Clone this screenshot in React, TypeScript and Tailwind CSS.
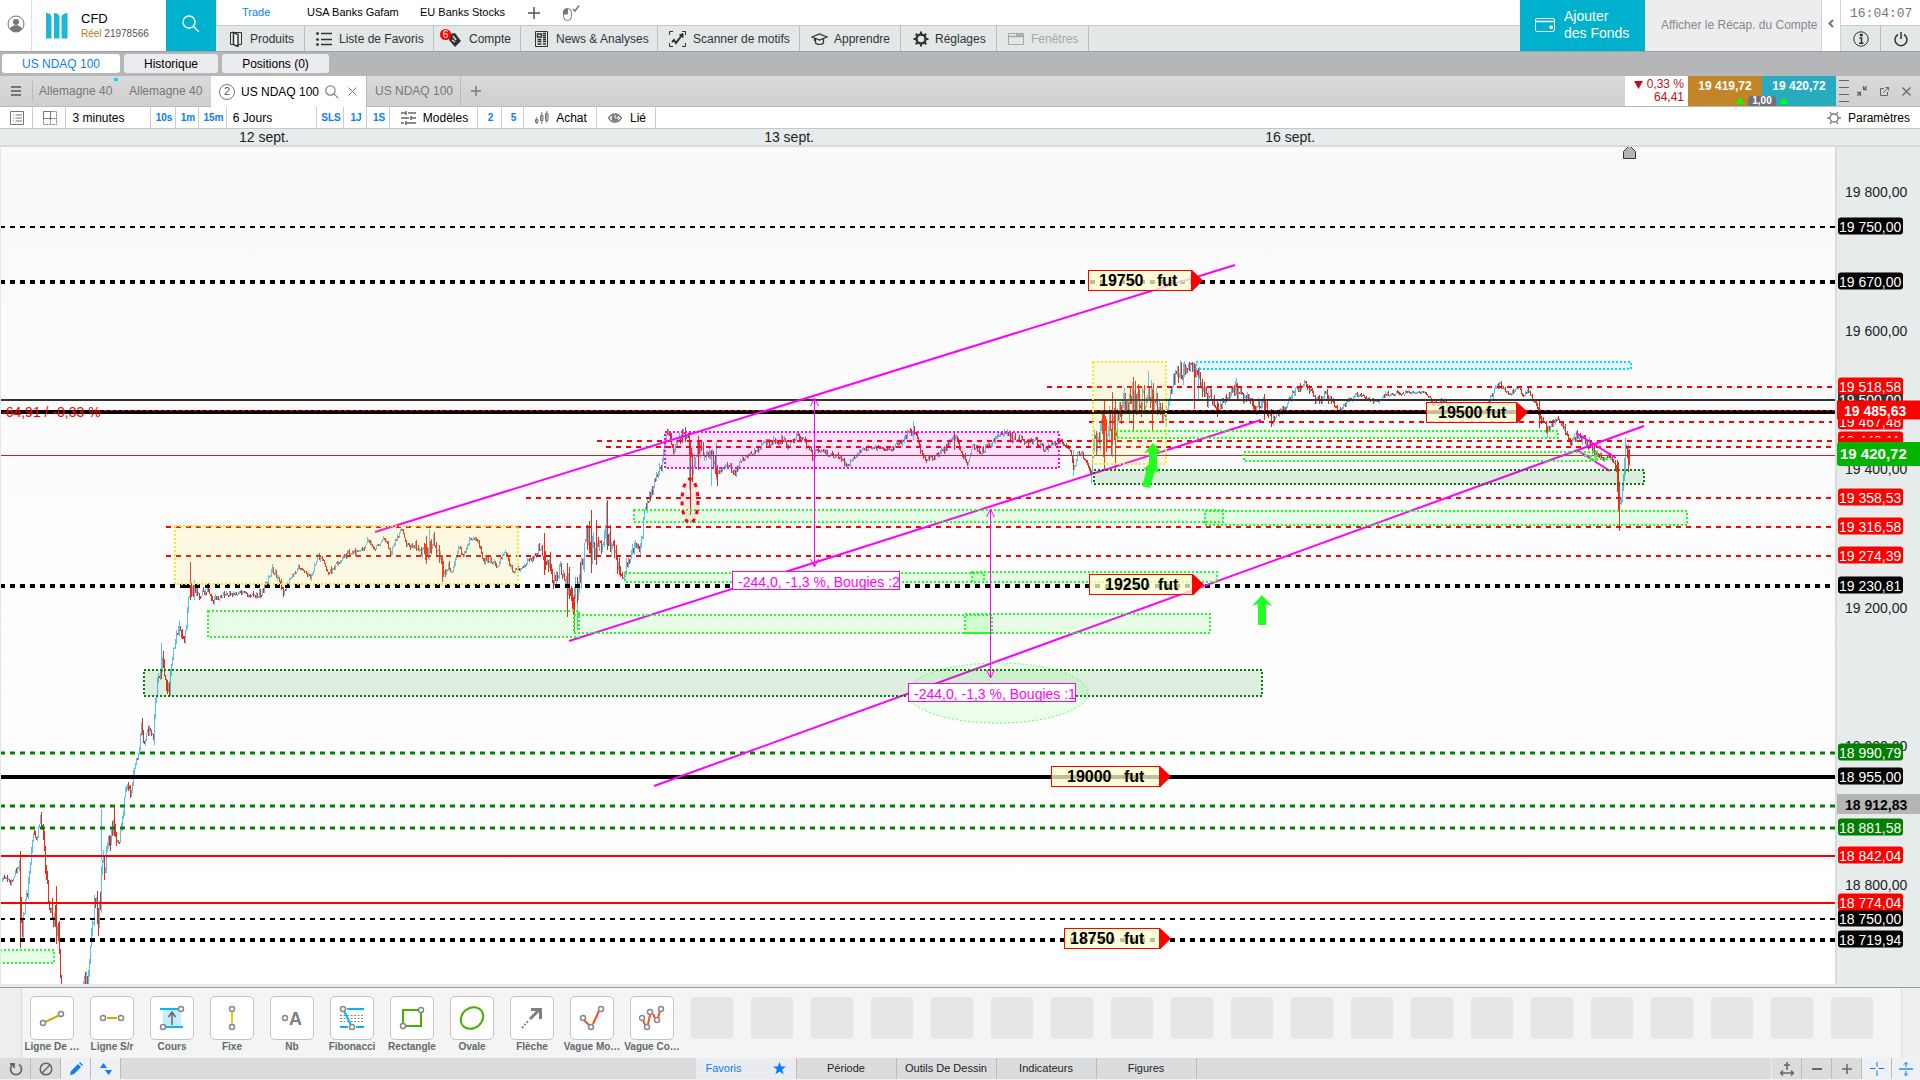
import React from "react";

/* ---------- price chart data ---------- */

type Pt = [number, number, number?];

const PRICE_PATH: Pt[] = [
  [2, 881, 2], [5, 876], [10, 883], [15, 872], [19, 865, 4], [20, 920, 26], [22, 920, 14], [25, 908, 10], [28, 880, 8], [31, 850, 6], [33, 832, 3],
  [36, 840, 3], [40, 817, 3], [43, 835, 8], [45, 870, 16], [48, 890, 16], [50, 905, 14], [52, 915, 14], [55, 915, 16], [57, 930, 14], [59, 950, 14],
  [60, 975, 6], [62, 990, 4], [64, 1010], [80, 1005], [83, 980, 6], [85, 985, 8], [88, 975, 10], [91, 940, 8], [94, 905, 8], [96, 905, 10], [98, 930, 14], [100, 895, 14],
  [102, 860, 12], [104, 870, 9], [107, 840, 10], [110, 840, 12], [113, 820, 12], [116, 838, 6], [119, 845, 5], [122, 815, 8], [126, 785, 6],
  [130, 795, 6], [134, 770, 5], [138, 755, 4], [141, 725, 6], [144, 745, 6], [149, 725, 6], [153, 735, 6], [156, 690, 10], [158, 682, 8],
  [162, 665, 10], [165, 678, 8], [169, 690, 8], [172, 660, 8], [176, 640, 8], [180, 628, 7], [184, 640, 7], [187, 610, 6], [190, 590, 8],
  [191, 590, 10], [195, 592, 6], [200, 595, 4], [207, 588, 4], [213, 600, 4], [218, 598, 3], [225, 595, 3], [240, 592, 2], [250, 596, 3], [260, 595, 4],
  [268, 580, 4], [272, 569, 4], [278, 578, 4], [283, 595, 4], [290, 580, 4], [298, 566, 3], [303, 570, 2], [310, 578, 3], [317, 556, 3],
  [323, 560, 3], [328, 573, 3], [334, 568, 4], [340, 560, 3], [347, 553, 3], [355, 552, 3], [362, 550, 2], [368, 540, 4], [375, 548, 2],
  [384, 538, 3], [390, 552, 4], [398, 535, 3], [402, 530, 3], [406, 545, 3], [415, 545, 4], [420, 552, 5], [427, 550, 8], [432, 540, 9],
  [438, 552, 6], [444, 573, 5], [448, 565, 5], [452, 572, 4], [458, 548, 3], [463, 555, 3], [470, 537, 3], [478, 540, 3], [483, 560, 3],
  [490, 560, 3], [497, 565, 3], [504, 550, 3], [512, 570, 3], [520, 570, 2], [527, 562, 3], [535, 555, 3], [541, 545, 5], [545, 565, 12],
  [549, 570, 12], [555, 580, 6], [560, 568, 5], [565, 578, 6], [568, 590, 18], [572, 600, 20], [576, 590, 18], [580, 580, 18], [583, 550, 14],
  [586, 530, 10], [590, 545, 16], [594, 555, 14], [600, 545, 8], [606, 530, 12], [612, 550, 8], [616, 560, 8], [619, 575, 8], [622, 580, 6],
  [626, 565, 5], [632, 552, 5], [636, 545, 5], [640, 550, 6], [644, 512, 5], [650, 495, 5], [655, 480, 5], [661, 465, 5], [665, 440, 8],
  [669, 435, 6], [673, 450, 5], [678, 440, 5], [683, 435, 6], [688, 440, 7], [690, 465, 14], [692, 465, 12], [697, 445, 8], [705, 455, 7],
  [711, 455, 8], [717, 475, 6], [722, 470, 3], [728, 465, 4], [735, 475, 4], [740, 460, 3], [748, 455, 2], [757, 450, 3], [765, 442, 4],
  [775, 445, 5], [780, 440, 5], [788, 445, 4], [797, 436, 3], [803, 440, 3], [812, 455, 4], [820, 450, 3], [830, 455, 3], [838, 455, 3],
  [846, 466, 3], [855, 455, 3], [865, 448, 2], [880, 448, 2], [890, 450, 2], [900, 442, 3], [908, 435, 4], [914, 430, 4], [920, 450, 3],
  [926, 460, 3], [935, 455, 3], [945, 450, 4], [950, 440, 4], [955, 435, 4], [960, 450, 4], [967, 463, 3], [972, 445, 3], [980, 453, 3],
  [990, 443, 4], [1000, 435, 3], [1006, 433, 4], [1015, 440, 4], [1025, 442, 4], [1035, 440, 4], [1045, 450, 3], [1052, 445, 4], [1060, 440, 3],
  [1065, 445, 3], [1070, 450, 3], [1073, 470, 4], [1078, 450, 3], [1082, 455, 3], [1087, 465, 3], [1091, 474, 4], [1094, 440, 14], [1098, 430, 16],
  [1104, 435, 20], [1110, 425, 22], [1115, 440, 20], [1118, 410, 12], [1125, 402, 12], [1133, 398, 14], [1140, 405, 12], [1148, 390, 12],
  [1154, 400, 12], [1160, 412, 7], [1166, 415, 7], [1170, 390, 6], [1173, 378, 5], [1178, 372, 7], [1183, 372, 10], [1190, 365, 4],
  [1196, 368, 8], [1200, 380, 8], [1207, 402, 10], [1213, 400, 8], [1218, 410, 5], [1225, 400, 5], [1232, 390, 8], [1237, 390, 7],
  [1243, 400, 5], [1250, 397, 5], [1256, 408, 6], [1264, 400, 5], [1271, 420, 5], [1278, 413, 3], [1285, 408, 3], [1292, 392, 4], [1300, 387, 4],
  [1305, 383, 3], [1313, 397, 4], [1320, 402, 4], [1325, 395, 5], [1332, 402, 4], [1338, 410, 4], [1345, 403, 3], [1355, 395, 3], [1362, 395, 2],
  [1370, 400, 2], [1378, 402, 2], [1385, 393, 3], [1400, 393, 2], [1425, 392, 1], [1433, 403, 3], [1445, 402, 3], [1455, 415, 3],
  [1470, 418, 2], [1485, 410, 3], [1490, 400, 4], [1495, 385, 3], [1502, 385, 3], [1508, 395, 2], [1518, 388, 3], [1523, 395, 3], [1528, 390, 2],
  [1535, 405, 4], [1540, 415, 6], [1547, 430, 4], [1550, 425, 3], [1557, 418, 3], [1564, 430, 4], [1570, 445, 4], [1577, 436, 5],
  [1583, 440, 5], [1590, 445, 5], [1596, 455, 4], [1602, 458, 3], [1608, 455, 4], [1614, 460, 4], [1617, 475, 8], [1618, 505, 22], [1620, 500, 14],
  [1623, 475, 8], [1625, 450, 12], [1627, 450, 10], [1629, 462, 8],
];

/* isolated long wicks: x, top, bottom, rising */
const WICKS: [number, number, number, boolean][] = [
  [20, 860, 948, false], [56, 886, 940, false], [101, 809, 860, true], [114, 807, 836, false], [161, 643, 672, true], [190, 562, 600, false],
  [194, 580, 600, true], [426, 536, 564, false], [429, 529, 560, true], [442, 555, 582, false], [544, 533, 575, false], [567, 563, 617, false],
  [574, 595, 632, false], [577, 580, 630, true], [591, 510, 573, false], [596, 520, 565, false], [606, 502, 545, true], [607, 500, 550, false],
  [690, 440, 515, false], [689, 440, 490, true], [711, 450, 486, true], [717, 465, 486, false], [698, 438, 470, false], [716, 442, 480, true],
  [913, 421, 440, true], [954, 433, 450, false], [1073, 450, 476, true], [1091, 470, 484, true], [1104, 400, 470, false], [1112, 392, 445, false],
  [1115, 400, 471, false], [1133, 384, 430, false], [1148, 371, 400, true], [1152, 390, 430, false], [1166, 405, 425, true], [1194, 365, 409, false],
  [1198, 370, 400, true], [1217, 400, 417, false], [1236, 378, 395, true], [1264, 395, 420, false], [1271, 415, 427, false],
  [1539, 400, 428, false], [1547, 425, 438, true], [1617, 460, 492, false], [1619, 489, 531, false], [1625, 438, 475, true], [1628, 450, 472, false],
];

function buildCandles() {
  let seed = 7919;
  const rnd = () => {
    seed = (seed * 16807) % 2147483647;
    return seed / 2147483647;
  };
  let up = "";
  let down = "";
  let prev = PRICE_PATH[0][1];
  let i = 0;
  for (let x = 2; x < 1630; x += 1) {
    while (i < PRICE_PATH.length - 2 && PRICE_PATH[i + 1][0] <= x) i++;
    const [x0, y0, v0 = 3] = PRICE_PATH[i];
    const [x1, y1, v1 = 3] = PRICE_PATH[i + 1];
    const t = (x - x0) / (x1 - x0);
    const vol = v0 + (v1 - v0) * t;
    const close = y0 + (y1 - y0) * t + (rnd() - 0.5) * vol * 1.8;
    /* every third column keeps only a short body, so the bars stay distinct */
    const wick = x % 3 === 0 ? 0.1 : 0.8;
    const top = Math.min(prev, close) - rnd() * vol * wick;
    const bottom = Math.max(prev, close) + rnd() * vol * wick;
    const seg = `M${x}.5 ${Math.round(top)}V${Math.round(Math.max(bottom, top + 2))}`;
    if (close < prev) up += seg;
    else down += seg;
    prev = close;
  }
  WICKS.forEach(([x, a, b, rising]) => {
    const seg = `M${x}.5 ${a}V${b}`;
    if (rising) up += seg;
    else down += seg;
  });
  return { up, down };
}

const CANDLES = buildCandles();

/* y, colour, thickness, dash, start x, end x */
const LEVELS: [number, string, number, string, number, number][] = [
  [227, "#000", 2, "5 5", 0, 1835], [282, "#000", 4, "5 5", 0, 1835], [400, "#333", 2, "", 0, 1835], [412, "#000", 4, "", 0, 1835],
  [387, "#f00", 2, "5 5", 1047, 1832], [422, "#f00", 2, "5 5", 1089, 1832], [441, "#f00", 2, "5 5", 597, 1832], [447, "#f00", 2, "5 5", 606, 1832],
  [498, "#f00", 2, "5 5", 526, 1832], [527, "#f00", 2, "5 5", 166, 1832], [556, "#f00", 2, "5 5", 166, 1832], [586, "#000", 4, "5 5", 185, 1835],
  [586, "#000", 4, "5 5", 0, 185],
  [753, "#008000", 3, "5 5", 0, 1835], [777, "#000", 4, "", 0, 1835], [806, "#008000", 3, "5 5", 0, 1835], [828, "#008000", 3, "5 5", 0, 1835],
  [856, "#f00", 2, "", 0, 1835], [903, "#f00", 2, "", 0, 1835], [919, "#000", 2, "5 5", 0, 1835], [940, "#000", 4, "5 5", 0, 1835],
];

/* x1, y1, x2, y2, stroke, fill */
const LIME = "#22ff22";
const LIME_FILL = "rgba(40,255,40,0.1)";
const ZONES: [number, number, number, number, string, string][] = [
  [665, 432, 1059, 468, "#ff00ff", "rgba(255,0,255,0.1)"],
  [175, 526, 518, 584, "#ffe620", "rgba(255,235,60,0.13)"],
  [1093, 362, 1166, 464, "#ffe620", "rgba(255,235,60,0.13)"],
  [1196, 362, 1631, 369, "#00d8ff", "rgba(0,216,255,0.12)"],
  [208, 611, 579, 637, LIME, LIME_FILL], [574, 615, 992, 633, LIME, LIME_FILL], [965, 614, 1210, 633, LIME, LIME_FILL],
  [625, 573, 984, 582, LIME, LIME_FILL], [972, 572, 1217, 582, LIME, LIME_FILL], [634, 510, 1223, 522, LIME, LIME_FILL],
  [1205, 511, 1687, 525, LIME, LIME_FILL], [1116, 431, 1558, 438, LIME, LIME_FILL], [1244, 452, 1597, 461, LIME, LIME_FILL],
  [-4, 950, 54, 963, LIME, LIME_FILL], [144, 670, 1262, 696, "#008000", "rgba(0,128,0,0.12)"], [1094, 470, 1644, 484, "#008000", "rgba(0,128,0,0.12)"],
];

const TRENDS: [number, number, number, number, number][] = [
  [375, 532, 1235, 265, 2], [569, 641, 1261, 420, 2], [654, 786, 1644, 426, 2],
  [1576, 433, 1616, 458, 2], [1577, 450, 1610, 471, 2],
];

/* left, right, top, number x, "fut" x, number */
const TAGS: [number, number, number, number, number, string][] = [
  [1088, 1192, 270, 1099, 1157, "19750"], [1089, 1193, 574, 1105, 1158, "19250"], [1426, 1517, 402, 1438, 1486, "19500"],
  [1051, 1160, 766, 1067, 1124, "19000"], [1064, 1160, 928, 1070, 1124, "18750"],
];

const MEASURES: [number, number, number, string][] = [[732, 571, 168, "-244,0, -1,3 %, Bougies :2"], [908, 683, 168, "-244,0, -1,3 %, Bougies :1"]];

function Chart() {
  return (
    <svg className="absolute inset-0 h-full w-full" viewBox="1 147 1834 837" preserveAspectRatio="none" role="img" aria-label="US NDAQ 100, 3 minutes">
      <path d={CANDLES.up} stroke="#5bc0eb" strokeWidth="1" fill="none" />
      <path d={CANDLES.down} stroke="#ee2c14" strokeWidth="1" fill="none" />
      {LEVELS.map(([y, c, w, d, a, b], i) => (
        <line key={i} x1={a} x2={b} y1={y} y2={y} stroke={c} strokeWidth={w} strokeDasharray={d || undefined} />
      ))}
      <line x1="104" x2="1835" y1="410.5" y2="410.5" stroke="#f00" strokeWidth="1" strokeDasharray="3 3" />
      <line x1="0" x2="1835" y1="455.5" y2="455.5" stroke="#e01818" strokeWidth="1" />
      <text x="1" y="417" fill="#f00" className="font-['Liberation_Sans'] text-[14px]">-64,91 / -0,33 %</text>
      {TRENDS.map(([a, b, c, d, w], i) => (
        <line key={i} x1={a} y1={b} x2={c} y2={d} stroke="#ff00ff" strokeWidth={w} />
      ))}
      {ZONES.map(([a, b, c, d, s, f], i) => (
        <rect key={i} x={a} y={b} width={c - a} height={d - b} stroke={s} fill={f} strokeWidth="2" strokeDasharray="2 2" />
      ))}
      <ellipse cx="690" cy="501" rx="8" ry="22" fill="rgba(255,0,0,0.08)" stroke="#f00" strokeWidth="3" strokeDasharray="4 5" />
      <ellipse cx="998" cy="693" rx="90" ry="30" fill="rgba(40,255,40,0.08)" stroke="#5cff5c" strokeWidth="1" strokeDasharray="2 2" />
      {[[814.5, 398, 567], [990.5, 509, 678]].map(([x, a, b]) => (
        <path key={x} d={`M${x} ${a}V${b}M${x - 4} ${a + 8}L${x} ${a}L${x + 4} ${a + 8}M${x - 4} ${b - 8}L${x} ${b}L${x + 4} ${b - 8}`} stroke="#ff00ff" fill="none" />
      ))}
      {MEASURES.map(([x, y, w, label]) => (
        <g key={label}>
          <rect x={x + 0.5} y={y + 0.5} width={w - 1} height="18" fill="#fff" stroke="#ff00ff" />
          <text x={x + 6} y={y + 16} fill="#ff00ff" className="font-['Liberation_Sans'] text-[14px]">{label}</text>
        </g>
      ))}
      {TAGS.map(([l, r, t, nx, fx, label]) => (
        <g key={label}>
          <rect x={l + 0.5} y={t + 0.5} width={r - l - 1} height="20" fill="rgba(255,255,205,0.75)" stroke="#f00" />
          <path d={`M${r} ${t}l11 10.5l-11 11z`} fill="#f00" />
          <text x={nx} y={t + 16} className="font-['Liberation_Sans'] text-[16px] font-bold">{label}</text>
          <text x={fx} y={t + 16} className="font-['Liberation_Sans'] text-[16px] font-bold">fut</text>
        </g>
      ))}
      <path d="M1262 595l10 11-6-2v21h-8v-21l-6 2z" fill={LIME} />
      <path d="M1153 443l9 10-5-1v17h-8v-17l-5 1z" fill={LIME} />
      <path d="M1154 460l6 13-5-2-5 17-8-2 5-17-5 1z" fill={LIME} />
      <path d="M1584 456h14M1590 459h22" stroke={LIME} strokeWidth="2" strokeDasharray="3 2" />
      <path d="M1623.500 158.500v-7l6-6 6 6v7z" fill="#b4b4b4" stroke="#333" />
    </svg>
  );
}

/* ---------- price axis ---------- */

const TICKS: [number, string][] = [[192, "19 800,00"], [331, "19 600,00"], [469, "19 400,00"], [608, "19 200,00"], [746, "19 000,00"], [885, "18 800,00"]];

/* y of the label's centre, text, background class */
const BADGES: [number, string, string][] = [
  [226, "19 750,00", "bg-black"], [281, "19 670,00", "bg-black"], [399, "19 500,00", "bg-[#333]"], [386, "19 518,58", "bg-[#f00]"],
  [421, "19 467,48", "bg-[#f00]"], [440, "19 440,11", "bg-[#f00]"], [446, "19 432,98", "bg-[#f00]"], [497, "19 358,53", "bg-[#f00]"], [526, "19 316,58", "bg-[#f00]"],
  [555, "19 274,39", "bg-[#f00]"], [585, "19 230,81", "bg-black"], [752, "18 990,79", "bg-[#008000]"], [776, "18 955,00", "bg-black"],
  [827, "18 881,58", "bg-[#008000]"], [855, "18 842,04", "bg-[#f00]"], [918, "18 750,00", "bg-black"], [902, "18 774,04", "bg-[#f00]"], [939, "18 719,94", "bg-black"],
];

const pct = (y: number) => ({ top: `${((y - 147) / 837) * 100}%` });

function PriceAxis() {
  return (
    <div className="relative w-[85px] shrink-0 overflow-hidden border-l-2 border-[#d9dcdc] bg-[#e6ebeb] text-[14px] leading-[17px]">
      {TICKS.map(([y, t]) => (
        <span key={t} className="absolute left-2 -translate-y-1/2 text-[#222]" style={pct(y)}>{t}</span>
      ))}
      {BADGES.map(([y, t, bg]) => (
        <span key={t} style={pct(y)} className={"absolute left-px h-[17px] w-[65px] -translate-y-1/2 rounded-[3px] pl-px leading-[19px] text-white " + bg}>{t}</span>
      ))}
      <span style={pct(410)} className="absolute inset-x-0 h-[19px] -translate-y-1/2 bg-[#f00] pl-[7px] font-bold leading-[20px] text-white">19 485,63</span>
      <span style={pct(454)} className="absolute inset-x-0 h-6 -translate-y-1/2 rounded-l-[3px] bg-[#00b400] pl-[3px] text-[15px] font-bold leading-6 text-white">19 420,72</span>
      <span style={pct(804)} className="absolute inset-x-0 h-5 -translate-y-1/2 bg-[#b5b5b5] pl-2 font-bold leading-[22px] text-black">18 912,83</span>
    </div>
  );
}

/* ---------- icons ---------- */

function Icon({ size = 16, h, children, className = "" }: { size?: number; h?: number; children: React.ReactNode; className?: string }) {
  const hh = h ?? size;
  return (
    <svg width={size} height={hh} viewBox={`0 0 ${size} ${hh}`} fill="none" stroke="currentColor" className={"shrink-0 " + className} aria-hidden="true">
      {children}
    </svg>
  );
}

const Search = ({ size = 18, className = "" }: { size?: number; className?: string }) => (
  <svg width={size} height={size} viewBox="0 0 18 18" fill="none" stroke="currentColor" strokeWidth="1.4" className={className} aria-hidden="true">
    <circle cx="7" cy="7" r="6" /><path d="M11.500 11.500L17 17" />
  </svg>
);

const I = {
  door: <Icon size={14} h={16}><path d="M1.500 1.500h3v12h-3zM5 1.500h7.500v12H9" /><path d="M4.500 1.500L9 3.500v12L4.500 13.500z" fill="#fff" strokeWidth="1.500" /></Icon>,
  list: <Icon size={16}><path d="M5 2.500h11M5 8.500h11M5 13.500h11" strokeWidth="1.500" /><circle cx="1.500" cy="2.500" r="1" fill="currentColor" /><circle cx="1.500" cy="8.500" r="1" fill="currentColor" /><circle cx="1.500" cy="13.500" r="1" fill="currentColor" /></Icon>,
  news: <Icon size={13} h={16}><path d="M.5.5h12v15H.5z" /><path d="M2.500 3h4v3h-4zM8 2.500h3M8 4.500h3M8 6.500h3M2.500 8.500h4M8 8.500h3M2.500 10.500h4M8 10.500h3M2.500 13h4M8 13h3" strokeWidth="1.500" /></Icon>,
  scan: <Icon size={17} h={16}><path d="M.5 4V.5H4M13 .5h3.500V4M16.500 12v3.500H13M4 15.500H.5V12" /><path d="M3 11l2-2 2 3 6-8" strokeWidth="2" /><path d="M14 2.500v4l-3.500-2.500z" fill="currentColor" /></Icon>,
  learn: <Icon size={17} h={12}><path d="M1 4l7.500-3L16 4 8.500 7zM3.500 5v3M4.500 6v4c2 2 6 2 8 0V6" strokeWidth="1.200" /></Icon>,
  gear: <Icon size={16}><circle cx="8" cy="8" r="4.500" strokeWidth="2.500" /><path d="M8 .5v3M8 12.500v3M.5 8h3M12.500 8h3M2.700 2.700l2 2M11.300 11.300l2 2M2.700 13.300l2-2M11.300 4.700l2-2" strokeWidth="2" /></Icon>,
  win: <Icon size={16} h={12}><path d="M.5.5h15v11H.5z" /><path d="M1 3.500h14M8 2h7" strokeWidth="1.500" /></Icon>,
};

const Account = () => (
  <span className="relative block h-5 w-[22px]">
    <svg width="22" height="20" viewBox="0 0 22 20" aria-hidden="true"><path d="M10 5l5-1 6 8-6 6-6-7z" fill="#333" /><path d="M13 7l3 4M12 11l3 2" stroke="#ddd" strokeWidth="1.500" /></svg>
    <span className="absolute left-0 top-0 size-[11px] rounded-full bg-[#f00] text-center text-[10px] leading-[11px] text-white">6</span>
  </span>
);

/* ---------- header ---------- */

const MENU: [string, React.ReactNode, string][] = [
  ["Produits", I.door, "w-[89px] gap-[7px] pl-[13px]"],
  ["Liste de Favoris", I.list, "w-[129px] gap-[7px] pl-[11px]"],
  ["Compte", <Account key="account" />, "w-[87px] gap-[7px] pl-[6px]"],
  ["News & Analyses", I.news, "w-[137px] gap-[8px] pl-[14px]"],
  ["Scanner de motifs", I.scan, "w-[142px] gap-[7px] pl-[11px]"],
  ["Apprendre", I.learn, "w-[101px] gap-[6px] pl-[11px]"],
  ["Réglages", I.gear, "w-[96px] gap-[6px] pl-[12px]"],
  ["Fenêtres", I.win, "w-[92px] gap-[7px] pl-[11px]"],
];

function Header() {
  return (
    <header className="flex h-[52px] border-b border-[#9aa0ab] bg-white">
      <button aria-label="Profil" className="flex w-8 items-center justify-center border-r border-[#ddd] pb-1 text-[#777]">
        <Icon size={18}><circle cx="9" cy="9" r="8" /><circle cx="9" cy="7" r="3" fill="currentColor" stroke="none" /><path d="M3 14c1-5 11-5 12 0-3 4-9 4-12 0z" fill="currentColor" stroke="none" /></Icon>
      </button>
      <div className="flex w-[134px] items-center pl-[14px]">
        <svg width="22" height="26" viewBox="0 0 22 26" fill="#1fb8d3" aria-hidden="true">
          <path d="M0 0c3 0 5 1 5.500 3.500V25.500H0zM8 0c3 0 5 1 5.500 3.500V25.500H8zM15.500 3C17 1 19 0 21.500 0v25.500h-6z" />
        </svg>
        <div className="ml-[13px] leading-[15px]">
          <div className="text-[13px] text-black">CFD</div>
          <div className="text-[10px] text-[#555]"><span className="text-[#b07d10]">Réel</span> 21978566</div>
        </div>
      </div>
      <button aria-label="Rechercher" className="flex w-[50px] items-center justify-center bg-[#00b1cd] pb-1 text-white"><Search size={18} /></button>
      <div className="flex min-w-0 flex-1 flex-col">
        <nav className="flex h-[25px] items-center pl-[26px] text-[11px]">
          <a href="#trade" className="w-[65px] text-[#0a7cff]">Trade</a>
          <a href="#usa" className="w-[113px] whitespace-nowrap">USA Banks Gafam</a>
          <a href="#eu" className="w-[108px] whitespace-nowrap">EU Banks Stocks</a>
          <button aria-label="Ajouter un onglet" className="mr-[22px] text-[#555]"><Icon size={12}><path d="M6 0v12M0 6h12" strokeWidth="1.500" /></Icon></button>
          <button aria-label="Souris" className="text-[#777]"><Icon size={18} h={16}><rect x="1.500" y="3.500" width="8" height="12" rx="4" /><path d="M1.500 9V6l2-2h2v5z" fill="currentColor" /><path d="M11 4l2 2 4-5.500" strokeWidth="1.500" /></Icon></button>
        </nav>
        <nav className="flex h-[26px] border-t border-[#c4c8c8] bg-[#e2e7e7] text-[12px] text-[#333]">
          {MENU.map(([label, icon, box]) => (
            <button key={label} disabled={label === "Fenêtres"} className={"flex items-center whitespace-nowrap border-r border-[#bcc0c0] disabled:text-[#a4a8a8] " + box}>
              {icon}
              <span>{label}</span>
            </button>
          ))}
        </nav>
      </div>
      <button className="flex w-[125px] items-center bg-[#00b1cd] pb-[2px] pl-[15px] text-left text-[14px] leading-[17px] text-white">
        <Icon size={20} h={14} className="mr-[9px]"><rect x=".5" y=".5" width="19" height="13" rx="1.500" /><path d="M1 3.500h18" strokeWidth="1.500" /><path d="M15 8h2.500v2.500H15z" fill="currentColor" /></Icon>
        <span>Ajouter<br />des Fonds</span>
      </button>
      <button className="w-[176px] whitespace-nowrap bg-[#ededf0] pb-[2px] pl-4 text-left text-[12px] text-[#888]">Afficher le Récap. du Compte</button>
      <button aria-label="Replier" className="flex w-5 items-center justify-center border-x border-[#d0d0d0] pb-1 text-[#777]"><Icon size={6} h={9}><path d="M5 1L1.500 4.500 5 8" strokeWidth="2" /></Icon></button>
      <div className="flex w-[79px] flex-col">
        <time className="h-[25px] pl-[9px] font-['Liberation_Mono'] text-[13px] leading-[27px] text-[#777]">16:04:07</time>
        <div className="flex flex-1 border-t border-[#c4c8c8] bg-[#e2e7e7] text-[#333]">
          <button aria-label="Informations" className="flex w-10 items-center justify-center border-r border-[#bbb]"><Icon size={16}><circle cx="8" cy="8" r="7.200" /><path d="M6.500 7h2v5M6 12.200h4.500M7.500 3.500h1.500v1H7.500z" strokeWidth="1.500" /></Icon></button>
          <button aria-label="Déconnexion" className="flex flex-1 items-center justify-center"><Icon size={14} h={16}><path d="M7 1v7M4 3.500a6 6 0 1 0 6 0" strokeWidth="1.500" /></Icon></button>
        </div>
      </div>
    </header>
  );
}

/* ---------- window tabs and toolbar ---------- */

function WindowTabs() {
  return (
    <div className="flex h-[31px] border-b border-[#b9bbbb] bg-linear-to-b from-[#dadada] to-[#cfcfcf] text-[12px] text-[#777]">
      <button aria-label="Menu" className="flex w-8 items-center justify-center text-[#555]"><Icon size={10} h={10}><path d="M0 1h10M0 5h10M0 9h10" strokeWidth="1.500" /></Icon></button>
      <span className="my-[5px] w-px bg-[#bbb]" />
      <button className="relative w-[91px] whitespace-nowrap pl-[6px] text-left">Allemagne 40<i className="absolute right-[6px] top-[2px] h-[3px] w-[4px] bg-[#00d8ff]" /></button>
      <button className="w-[87px] whitespace-nowrap pl-[5px] text-left">Allemagne 40</button>
      <div className="flex h-[31px] w-[156px] items-center border-r border-[#bbb] bg-white pl-2 text-black">
        <span className="mr-[6px] flex size-4 items-center justify-center rounded-full border border-[#777] text-[11px] text-[#555]">2</span>
        <button className="whitespace-nowrap">US NDAQ 100</button>
        <button aria-label="Chercher" className="ml-[6px] text-[#777]"><Search size={14} /></button>
        <button aria-label="Fermer l'onglet" className="ml-[9px] text-[#777]"><Icon size={9}><path d="M.5.5l8 8M8.500.5l-8 8" /></Icon></button>
      </div>
      <button className="w-[94px] whitespace-nowrap border-r border-[#bbb] pl-2 text-left">US NDAQ 100</button>
      <button aria-label="Nouvel onglet" className="ml-[10px] text-[#777]"><Icon size={10}><path d="M5 0v10M0 5h10" strokeWidth="1.500" /></Icon></button>
      <span className="flex-1" />
      <div className="w-[63px] whitespace-nowrap bg-white pr-[4px] pt-[2px] text-right leading-[13px] text-[#c00d18]">
        <div className="flex items-center justify-end gap-1"><Icon size={9} h={8}><path d="M0 0h9L4.500 8z" fill="currentColor" stroke="none" /></Icon>0,33 %</div>
        <div>64,41</div>
      </div>
      <div className="relative flex font-bold text-white">
        <button className="w-[74px] bg-[#c28428] pb-[10px]">19 419,72</button>
        <button className="w-[74px] bg-[#28aabf] pb-[10px]">19 420,72</button>
        <div className="absolute bottom-0 left-1/2 flex -translate-x-1/2 items-end gap-1">
          <Icon size={8} h={7} className="mb-[2px]"><path d="M0 7h8L4 0z" fill="#0f0" stroke="none" /></Icon>
          <span className="w-[28px] rounded-t-sm bg-[#6e7276] text-center text-[10px] leading-[10px]">1,00</span>
          <Icon size={8} h={7} className="mb-[2px]"><path d="M0 7h8L4 0z" fill="#0f0" stroke="none" /></Icon>
        </div>
      </div>
      <div className="flex w-[84px] items-center pl-[3px] text-[#666]">
        <Icon size={10} h={24}><path d="M0 1.500h10M0 8.500h10M0 15.500h10M0 22.500h10" /></Icon>
        <button aria-label="Réduire" className="ml-[8px]"><Icon size={10}><path d="M0 6.500h3.500V10M0 10l3-3M10 3.500H6.500V0M10 0L7 3" strokeWidth="1.300" /></Icon></button>
        <button aria-label="Détacher" className="ml-[13px]"><Icon size={9}><path d="M4 1.500H.5v7h7V5M3.500 5.500L8.500.5M5.500.5h3v3" /></Icon></button>
        <button aria-label="Fermer" className="ml-[13px]"><Icon size={9}><path d="M.5.5l8 8M8.500.5l-8 8" strokeWidth="1.300" /></Icon></button>
      </div>
    </div>
  );
}

function Toolbar() {
  const cell = "flex items-center justify-center whitespace-nowrap border-r border-[#ccc] pl-[2px] ";
  const blue = cell + "text-[10px] font-bold text-[#0a7cff] ";
  return (
    <div className="flex h-[22px] border-b border-[#c4c8c8] bg-white text-[12px] leading-[20px] text-black">
      <button aria-label="Liste" className={cell + "w-[33px] text-[#777]"}><Icon size={14}><path d="M.5.5h13v13H.5z" /><path d="M3 4h1M5.500 4H12M3 7h1M5.500 7H12M3 10h1M5.500 10H12" /></Icon></button>
      <button aria-label="Disposition" className={cell + "w-[33px] text-[#777]"}><Icon size={14}><path d="M.5.5h7v7h-7z" /><path d="M7.500.5h6v13H.5v-6M7.500 7.500v6M7.500 7.500h6" strokeDasharray="2 1" /></Icon></button>
      <button className={cell + "w-[85px] pr-[21px]"}>3 minutes</button>
      <button className={blue + "w-[25px]"}>10s</button>
      <button className={blue + "w-[23px]"}>1m</button>
      <button className={blue + "w-7"}>15m</button>
      <button className={cell + "w-[90px] pr-[40px]"}>6 Jours</button>
      <button className={blue + "w-[27px]"}>SLS</button>
      <button className={blue + "w-[23px]"}>1J</button>
      <button className={blue + "w-[23px]"}>1S</button>
      <button className={cell + "w-[88px] gap-[7px]"}><Icon size={15} h={14} className="text-[#666]"><path d="M0 2h5M7 2h8M0 7h8M10 7h5M0 12h3M5 12h10" strokeWidth="1.500" /><path d="M5 0v4M10 5v4M5 10v4" strokeWidth="1.500" /></Icon>Modèles</button>
      <button className={blue + "w-6"}>2</button>
      <button className={blue + "w-[22px]"}>5</button>
      <button className={cell + "w-[73px] gap-[7px]"}><Icon size={14} h={13} className="text-[#777]"><path d="M.5 8.500h2.500v3H.5zM5.500 4.500H8v5H5.500zM10.500 2.500H13v7h-2.500zM1.800 6v7M6.800 1v12M11.800 0v12" /></Icon>Achat</button>
      <button className={cell + "w-[59px] gap-2"}><Icon size={14} h={10} className="text-[#777]"><path d="M.5 5C4-.5 10-.5 13.500 5 10 10.500 4 10.500.5 5z" strokeWidth="1.500" /><circle cx="7" cy="5" r="3" fill="currentColor" /><path d="M7 2v3h3" stroke="#fff" /></Icon>Lié</button>
      <span className="flex-1" />
      <button className="mr-[10px] flex items-center gap-[7px]"><Icon size={14} className="text-[#777]"><circle cx="7" cy="7" r="4" strokeWidth="1.300" /><path d="M0 7h3M11 7h3M3 1l2 3M11 1L9 4M3 13l2-3M11 13l-2-3" strokeWidth="1.300" /></Icon>Paramètres</button>
    </div>
  );
}

/* ---------- drawing tools ---------- */

const Dot = ({ x, y }: { x: number; y: number }) => <circle cx={x} cy={y} r="2.500" fill="#fff" stroke="#888" strokeWidth="1.500" />;

const TOOLS: [string, React.ReactNode][] = [
  ["Ligne De …", <><path d="M6 18L21 11" stroke="#e0a000" strokeWidth="2" /><Dot x={4} y={19} /><Dot x={22} y={10} /></>],
  ["Ligne S/r", <><path d="M8 14h10" stroke="#e0a000" strokeWidth="2" /><Dot x={4} y={14} /><Dot x={22} y={14} /></>],
  ["Cours", <><path d="M4 5h18v18H4z" fill="#c5ecfc" /><path d="M1 5h20M5 23h19" stroke="#00b8f8" strokeWidth="2" /><path d="M13 21V9M9.500 13L13 8l3.500 5" stroke="#666" strokeWidth="1.500" fill="none" /><Dot x={22} y={5} /><Dot x={4} y={23} /></>],
  ["Fixe", <><path d="M13 8v12" stroke="#fcc800" strokeWidth="2" /><Dot x={13} y={5} /><Dot x={13} y={23} /></>],
  ["Nb", <><Dot x={6} y={14} /><text x="10" y="21" fill="#808080" className="font-['Liberation_Sans'] text-[18px] font-bold">A</text></>],
  ["Fibonacci", <><path d="M1 11.500h24M1 14.500h24M1 17.500h24" stroke="#888" strokeDasharray="2 1.500" /><path d="M8 5h17M1 23h8M17 23h8M5 7l7 14" stroke="#00b8f8" strokeWidth="2" /><Dot x={4} y={5} /><Dot x={13} y={23} /></>],
  ["Rectangle", <><path d="M4 20V6h15M22 8v14H7" stroke="#48b000" strokeWidth="2" fill="none" /><Dot x={22} y={6} /><Dot x={4} y={22} /></>],
  ["Ovale", <ellipse cx="13" cy="14" rx="12" ry="10" transform="rotate(-40 13 14)" fill="none" stroke="#48b000" strokeWidth="2" />],
  ["Flèche", <><path d="M3 24l7-8" stroke="#888" strokeWidth="2" strokeDasharray="2 1.500" /><path d="M11 15l9-9M12 5.500h9.500V15" stroke="#808080" strokeWidth="3" fill="none" /></>],
  ["Vague Mo…", <><path d="M5 16l5 5M14 20L20 7" stroke="#ff4a10" strokeWidth="2" /><Dot x={4} y={14} /><Dot x={12} y={23} /><Dot x={22} y={5} /></>],
  ["Vague Co…", <><path d="M4 16l2 5M9 20l2-9M14 10l2 4M19 14l2-7" stroke="#ff4a10" strokeWidth="2" /><Dot x={3} y={14} /><Dot x={8} y={23} /><Dot x={11} y={8} /><Dot x={18} y={16} /><Dot x={22} y={5} /></>],
];

function DrawingTools() {
  return (
    <div className="flex h-[70px] bg-[#f4f4f5]">
      <div className="w-[22px] shrink-0 border-r border-[#ddd] bg-[#eee]" />
      <div className="flex min-w-0 flex-1 overflow-hidden">
        {TOOLS.map(([label, icon]) => (
          <button key={label} className="flex w-[60px] shrink-0 flex-col items-center pt-2">
            <span className="flex h-11 w-11 items-center justify-center rounded-[5px] border border-[#c4c4c4] bg-white">
              <svg width="26" height="28" viewBox="0 0 26 28" fill="none" aria-hidden="true">{icon}</svg>
            </span>
            <span className="mt-px whitespace-nowrap text-[10px] font-bold leading-3 text-[#5f6a6a]">{label}</span>
          </button>
        ))}
        {Array.from({ length: 20 }, (_, i) => (
          <span key={i} className="flex w-[60px] shrink-0 justify-center pt-[9px]"><span className="h-[42px] w-[42px] rounded bg-[#e6e6e6]" /></span>
        ))}
      </div>
      <div className="w-[19px] shrink-0 border-l border-[#ddd] bg-[#eee]" />
    </div>
  );
}

function BottomBar() {
  const b = "flex w-[30px] items-center justify-center border-r border-[#bbb] ";
  const t = "flex items-center justify-center whitespace-nowrap border-r border-[#bcbcbf] ";
  return (
    <div className="flex h-[22px] border-b border-[#f0f0f0] bg-[#dbdcde] pl-px text-[11px] text-[#222]">
      <button aria-label="Rafraîchir" className={b + "text-[#666]"}><Icon size={14}><path d="M4 2.500a5.500 5.500 0 1 0 6 0M1 2h4v4" strokeWidth="1.800" /></Icon></button>
      <button aria-label="Effacer" className={b + "text-[#666]"}><Icon size={14}><circle cx="7" cy="7" r="5.800" strokeWidth="1.500" /><path d="M3 11l8-8" strokeWidth="1.500" /></Icon></button>
      <button aria-label="Dessiner" className={b + "bg-[#eef0f3] text-[#0a7cff]"}><Icon size={14}><path d="M1 13l1-4 7-7 3 3-7 7zM10 1l1-1 3 3-1 1z" fill="currentColor" stroke="none" /></Icon></button>
      <button aria-label="Trier" className={b + "bg-[#eef0f3] text-[#0a7cff]"}><Icon size={12}><path d="M0 5h7L3.500 0zM5 7h7l-3.500 5z" fill="currentColor" stroke="none" /></Icon></button>
      <div className="flex flex-1 justify-center">
        <button className={t + "w-[101px] gap-[31px] bg-[#e9ebee] text-[#0a7cff]"}>Favoris<Icon size={13}><path d="M6.500 0l1.700 4.600H13L9.200 7.500l1.400 4.800-4.100-2.900-4.100 2.900 1.400-4.800L0 4.600h4.800z" fill="currentColor" stroke="none" /></Icon></button>
        <button className={t + "w-[100px]"}>Période</button>
        <button className={t + "w-[100px]"}>Outils De Dessin</button>
        <button className={t + "w-[100px]"}>Indicateurs</button>
        <button className={t + "w-[100px]"}>Figures</button>
      </div>
      <div className="flex w-[149px] border-l border-[#eee] text-[#666]">
        <button aria-label="Ajuster" className={b}><Icon size={14}><path d="M7 0v8M4 3h6M1 11h12M3 8.500L.5 11 3 13.500M11 8.500l2.500 2.500-2.500 2.500" strokeWidth="1.500" /></Icon></button>
        <button aria-label="Dézoomer" className={b}><Icon size={10}><path d="M0 5h10" strokeWidth="2" /></Icon></button>
        <button aria-label="Zoomer" className={b}><Icon size={10}><path d="M5 0v10M0 5h10" strokeWidth="1.500" /></Icon></button>
        <button aria-label="Réticule" className={b + "bg-[#eef0f3] text-[#0a7cff]"}><Icon size={14}><path d="M7 0v5M7 8.500V14M0 6.500h5.500M8.500 6.500H14" /></Icon></button>
        <button aria-label="Curseur" className="flex flex-1 items-center justify-center bg-[#eef0f3] text-[#0a7cff]"><Icon size={14}><path d="M0 7h14" strokeWidth="1.300" /><path d="M7 0v5M5 2.500L7 .5l2 2M7 9v5M5 11.500l2 2 2-2" /></Icon></button>
      </div>
    </div>
  );
}

export default function App() {
  const sub = "mt-[2px] h-[19px] whitespace-nowrap rounded-[3px] leading-[18px] ";
  return (
    <div className="flex min-h-screen flex-col overflow-hidden bg-white font-['Liberation_Sans',sans-serif] text-[12px] text-black">
      <Header />
      <nav className="flex h-6 gap-1 bg-[#b5b6b8] pl-[2px]">
        <button className={sub + "w-[118px] bg-white text-[#0a7cff]"}>US NDAQ 100</button>
        <button className={sub + "w-[94px] bg-[#ebecef]"}>Historique</button>
        <button className={sub + "w-[107px] bg-[#ebecef]"}>Positions (0)</button>
      </nav>
      <WindowTabs />
      <Toolbar />
      <div className="relative h-[18px] border-b-2 border-[#d8dbdb] bg-[#e6ebeb] text-[14px] leading-[17px] text-[#222]">
        <span className="absolute left-[12.5%] -ml-px">12 sept.</span>
        <span className="absolute left-[39.8%]">13 sept.</span>
        <span className="absolute left-[65.9%]">16 sept.</span>
      </div>
      <main className="flex min-h-[400px] flex-1 border-l border-[#e6e6e6]">
        <div className="relative min-w-0 flex-1 bg-linear-to-b from-[#fafafa] to-white"><Chart /></div>
        <PriceAxis />
      </main>
      <div className="h-1 border-b border-[#999] bg-[#e6ebeb]" />
      <DrawingTools />
      <BottomBar />
    </div>
  );
}
